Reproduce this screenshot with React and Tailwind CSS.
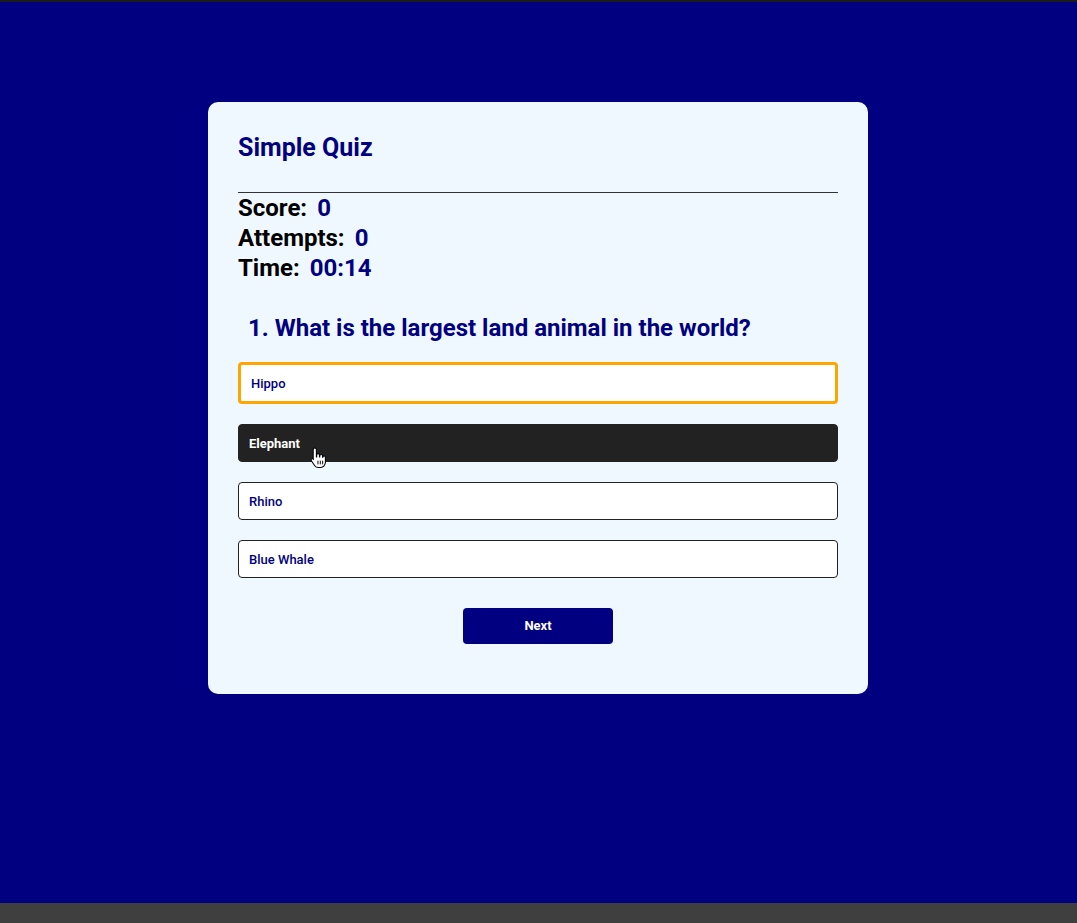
import React from "react";

function HandCursor() {
  return (
    <svg className="absolute left-[71px] top-[21px]" width="17" height="24" viewBox="0 0 16 22">
      <path
        d="M4.5 1.5c.8 0 1.5.7 1.5 1.5v7h.3V8.2c0-.8.6-1.3 1.3-1.3s1.3.6 1.3 1.3V10h.3V9c0-.8.6-1.3 1.3-1.3s1.3.6 1.3 1.3v1.3h.3c0-.7.6-1.2 1.2-1.2.7 0 1.2.6 1.2 1.3v4.6c0 2.6-1.900 5-4.6 5H8c-1.6 0-2.8-.7-3.7-2L1.3 13.6c-.4-.6-.3-1.4.3-1.8.6-.4 1.3-.3 1.7.2L3 12.3V3c0-.8.7-1.5 1.5-1.5z"
        fill="#ffffff"
        stroke="#000000"
        strokeWidth="1"
        strokeLinejoin="round"
      />
      <path d="M7.5 13.5v3.5M9.7 13.5v3.5M11.9 13.5v3.5" stroke="#000" strokeWidth="0.9" />
    </svg>
  );
}

export default function App() {
  return (
    <div className="h-[923px] flex flex-col font-['Roboto',sans-serif]">
      <div className="h-[2px] bg-[#1c1c1c]" />
      <div className="flex-1 bg-[#000080] flex justify-center pt-[100px] pr-[1px]">
        <div className="w-[660px] h-[592px] bg-[#f0f8ff] rounded-[10px] px-[30px] pt-[31px]">
          <h2 className="text-[25px] leading-[30px] font-bold text-[#000080]">Simple Quiz</h2>
          <hr className="mt-[29px] border-0 border-t border-[#333333]" />
          <div className="text-[24px] leading-[30px] font-bold text-black">
            <div className="flex gap-[10px]">
              <span>Score:</span>
              <span className="text-[#000080]">0</span>
            </div>
            <div className="flex gap-[10px]">
              <span>Attempts:</span>
              <span className="text-[#000080]">0</span>
            </div>
            <div className="flex gap-[10px]">
              <span>Time:</span>
              <span className="text-[#000080]">00:14</span>
            </div>
          </div>
          <h3 className="mt-[30px] px-[10px] text-[24px] leading-[30px] font-bold text-[#000080]">
            1. What is the largest land animal in the world?
          </h3>
          <div className="mt-[19px] flex flex-col gap-[20px]">
            <div className="h-[42px] flex items-center px-[10px] pt-[2px] bg-white border-[3px] border-[#ffa500] rounded-[4px] text-[13px] font-medium text-[#000080]">
              Hippo
            </div>
            <div className="relative h-[38px] flex items-center px-[10px] pt-[2px] bg-[#222222] border border-[#222222] rounded-[4px] text-[13px] font-bold text-white">
              Elephant
              <HandCursor />
            </div>
            <div className="h-[38px] flex items-center px-[10px] pt-[2px] bg-white border border-[#222222] rounded-[4px] text-[13px] font-medium text-[#000080]">
              Rhino
            </div>
            <div className="h-[38px] flex items-center px-[10px] pt-[2px] bg-white border border-[#222222] rounded-[4px] text-[13px] font-medium text-[#000080]">
              Blue Whale
            </div>
          </div>
          <div className="mt-[30px] flex justify-center">
            <button className="w-[150px] h-[36px] bg-[#000080] rounded-[4px] text-white text-[13px] font-bold">
              Next
            </button>
          </div>
        </div>
      </div>
      <div className="h-[20px] bg-[#3f3f3f]" />
    </div>
  );
}
